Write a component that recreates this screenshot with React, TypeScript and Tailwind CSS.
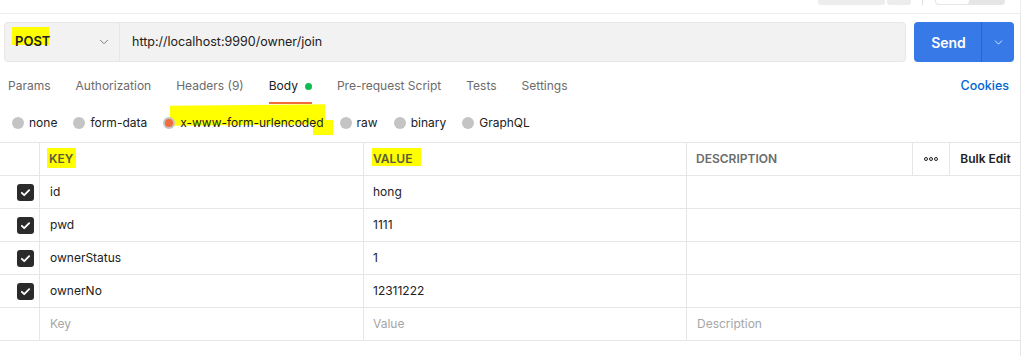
import { ChevronDown } from 'lucide-react';

const tabs = [
  { label: 'Params' },
  { label: 'Authorization' },
  { label: 'Headers (9)' },
  { label: 'Body', active: true },
  { label: 'Pre-request Script' },
  { label: 'Tests' },
  { label: 'Settings' },
];

const bodyTypes = ['none', 'form-data', 'x-www-form-urlencoded', 'raw', 'binary', 'GraphQL'];

const rows = [
  { key: 'id', value: 'hong' },
  { key: 'pwd', value: '1111' },
  { key: 'ownerStatus', value: '1' },
  { key: 'ownerNo', value: '12311222' },
];

const gridCols = 'grid grid-cols-[40px_324px_323px_226px_37px_71px]';

function Check() {
  return (
    <div className="w-[17px] h-[17px] rounded-[3px] bg-[#2b2b2b] flex items-center justify-center">
      <svg width="11" height="11" viewBox="0 0 12 12" fill="none">
        <path d="M2 6.3l2.6 2.6L10 3.4" stroke="white" strokeWidth="2" strokeLinecap="round" strokeLinejoin="round" />
      </svg>
    </div>
  );
}

export default function App() {
  return (
    <div className="relative w-[1035px] h-[356px] bg-white overflow-hidden font-['Inter',sans-serif] text-[12px] text-[#212121]">
      {/* top toolbar remains */}
      <div className="w-[1021px] h-[14px] border-b border-[#ededed] border-r flex items-start">
        <div className="ml-[818px] flex gap-[2px]">
          <div className="w-[67px] h-[5px] bg-[#ededed] rounded-b-[3px]" />
          <div className="w-[24px] h-[5px] bg-[#ededed] rounded-b-[3px]" />
        </div>
        <div className="ml-[11px] w-px h-[5px] bg-[#e0e0e0]" />
        <div className="ml-[12px] w-[70px] h-[5px] bg-[#e6e6e6] rounded-b-[4px] flex">
          <div className="ml-px w-[33px] h-[4px] bg-white rounded-b-[3px]" />
        </div>
      </div>

      <div className="w-[1021px] border-r border-[#e6e6e6] h-[342px]">
        {/* URL bar */}
        <div className="flex pl-[4px] pt-[8px] gap-[8px]">
          <div className="flex w-[902px] h-[40px] rounded-[4px] border border-[#e6e6e6] bg-[#f2f2f2]">
            <div className="w-[115px] flex items-center pl-[10px] pr-[8px] border-r border-[#e6e6e6]">
              <span className="relative font-semibold text-[13px] text-[#212121]">
                <span className="absolute -left-[3px] -top-[5px] w-[37px] h-[18px] bg-[#ffff00]" />
                <span className="relative">POST</span>
              </span>
              <ChevronDown className="ml-auto w-[14px] h-[14px] text-[#6b6b6b]" strokeWidth={1.5} />
            </div>
            <div className="flex items-center pl-[12px] text-[12.5px] text-[#212121]">http://localhost:9990/owner/join</div>
          </div>
          <div className="flex w-[100px] h-[40px] rounded-[4px] bg-[#3779e6] text-white">
            <div className="w-[67px] flex items-center justify-center font-semibold text-[14px] pl-[2px]">Send</div>
            <div className="w-px bg-[#2c66c6]" />
            <div className="flex-1 flex items-center justify-center">
              <ChevronDown className="w-[13px] h-[13px]" strokeWidth={1.5} />
            </div>
          </div>
        </div>

        {/* tabs */}
        <div className="flex items-start h-[45px] pl-[8px] pt-[15px] pr-[11px]">
          <div className="flex gap-[25px]">
            {tabs.map((t) => (
              <div key={t.label} className={`flex flex-col ${t.active ? 'text-[#212121]' : 'text-[#6b6b6b]'}`}>
                <div className="flex items-center gap-[7px] h-[18px]">
                  {t.label}
                  {t.active && <span className="w-[7px] h-[7px] rounded-full bg-[#0cbb52]" />}
                </div>
                {t.active && <div className="mt-[7px] h-[2px] bg-[#f26b3a]" />}
              </div>
            ))}
          </div>
          <div className="ml-auto h-[18px] flex items-center text-[#0265d2] font-medium text-[12.5px]">Cookies</div>
        </div>

        {/* body type radios */}
        <div className="flex items-center h-[35px] pl-[12px] pb-[3px] gap-[16px]">
          {bodyTypes.map((b) => {
            const selected = b === 'x-www-form-urlencoded';
            return (
              <div key={b} className="relative flex items-center gap-[5px]">
                {selected && (
                  <>
                    <span className="absolute left-[7px] -top-[9px] w-[155px] h-[20px] bg-[#ffff00] -rotate-[0.6deg]" />
                    <span className="absolute left-[150px] top-[6px] w-[20px] h-[15px] bg-[#ffff00]" />
                  </>
                )}
                <span className="relative w-[12px] h-[12px] rounded-full bg-[#c4c4c4] flex items-center justify-center">
                  {selected && <span className="w-[8px] h-[8px] rounded-full bg-[#f26b3a]" />}
                </span>
                <span className="relative text-[#212121]">{b}</span>
              </div>
            );
          })}
        </div>

        {/* table */}
        <div className="border-t border-[#e6e6e6]">
          <div className={`${gridCols} h-[33px] border-b border-[#e6e6e6] text-[12px] font-semibold text-[#6b6b6b]`}>
            <div className="border-r border-[#e6e6e6]" />
            <div className="border-r border-[#e6e6e6] flex items-center pl-[9px]">
              <span className="relative">
                <span className="absolute -left-[2px] -top-[2px] w-[29px] h-[20px] bg-[#ffff00]" />
                <span className="relative text-[#5a5a3a]">KEY</span>
              </span>
            </div>
            <div className="border-r border-[#e6e6e6] flex items-center pl-[9px]">
              <span className="relative">
                <span className="absolute -left-[1px] -top-[2px] w-[49px] h-[18px] bg-[#ffff00]" />
                <span className="relative text-[#5a5a3a]">VALUE</span>
              </span>
            </div>
            <div className="border-r border-[#e6e6e6] flex items-center pl-[9px]">DESCRIPTION</div>
            <div className="border-r border-[#e6e6e6] flex items-center justify-center">
              <svg width="14" height="4" viewBox="0 0 14 4" fill="none" stroke="#212121" strokeWidth="1">
                <circle cx="2" cy="2" r="1.5" />
                <circle cx="7" cy="2" r="1.5" />
                <circle cx="12" cy="2" r="1.5" />
              </svg>
            </div>
            <div className="flex items-center justify-center text-[#212121]">Bulk Edit</div>
          </div>
          {rows.map((r) => (
            <div key={r.key} className={`${gridCols} h-[33px] border-b border-[#e6e6e6]`}>
              <div className="border-r border-[#e6e6e6] flex items-center justify-end pr-[5px]">
                <Check />
              </div>
              <div className="border-r border-[#e6e6e6] flex items-center pl-[10px]">{r.key}</div>
              <div className="border-r border-[#e6e6e6] flex items-center pl-[9px]">{r.value}</div>
              <div className="col-span-3" />
            </div>
          ))}
          <div className={`${gridCols} h-[33px] border-b border-[#e6e6e6] text-[#a6a6a6]`}>
            <div className="border-r border-[#e6e6e6]" />
            <div className="border-r border-[#e6e6e6] flex items-center pl-[10px]">Key</div>
            <div className="border-r border-[#e6e6e6] flex items-center pl-[9px]">Value</div>
            <div className="col-span-3 flex items-center pl-[10px]">Description</div>
          </div>
        </div>
      </div>
    </div>
  );
}
